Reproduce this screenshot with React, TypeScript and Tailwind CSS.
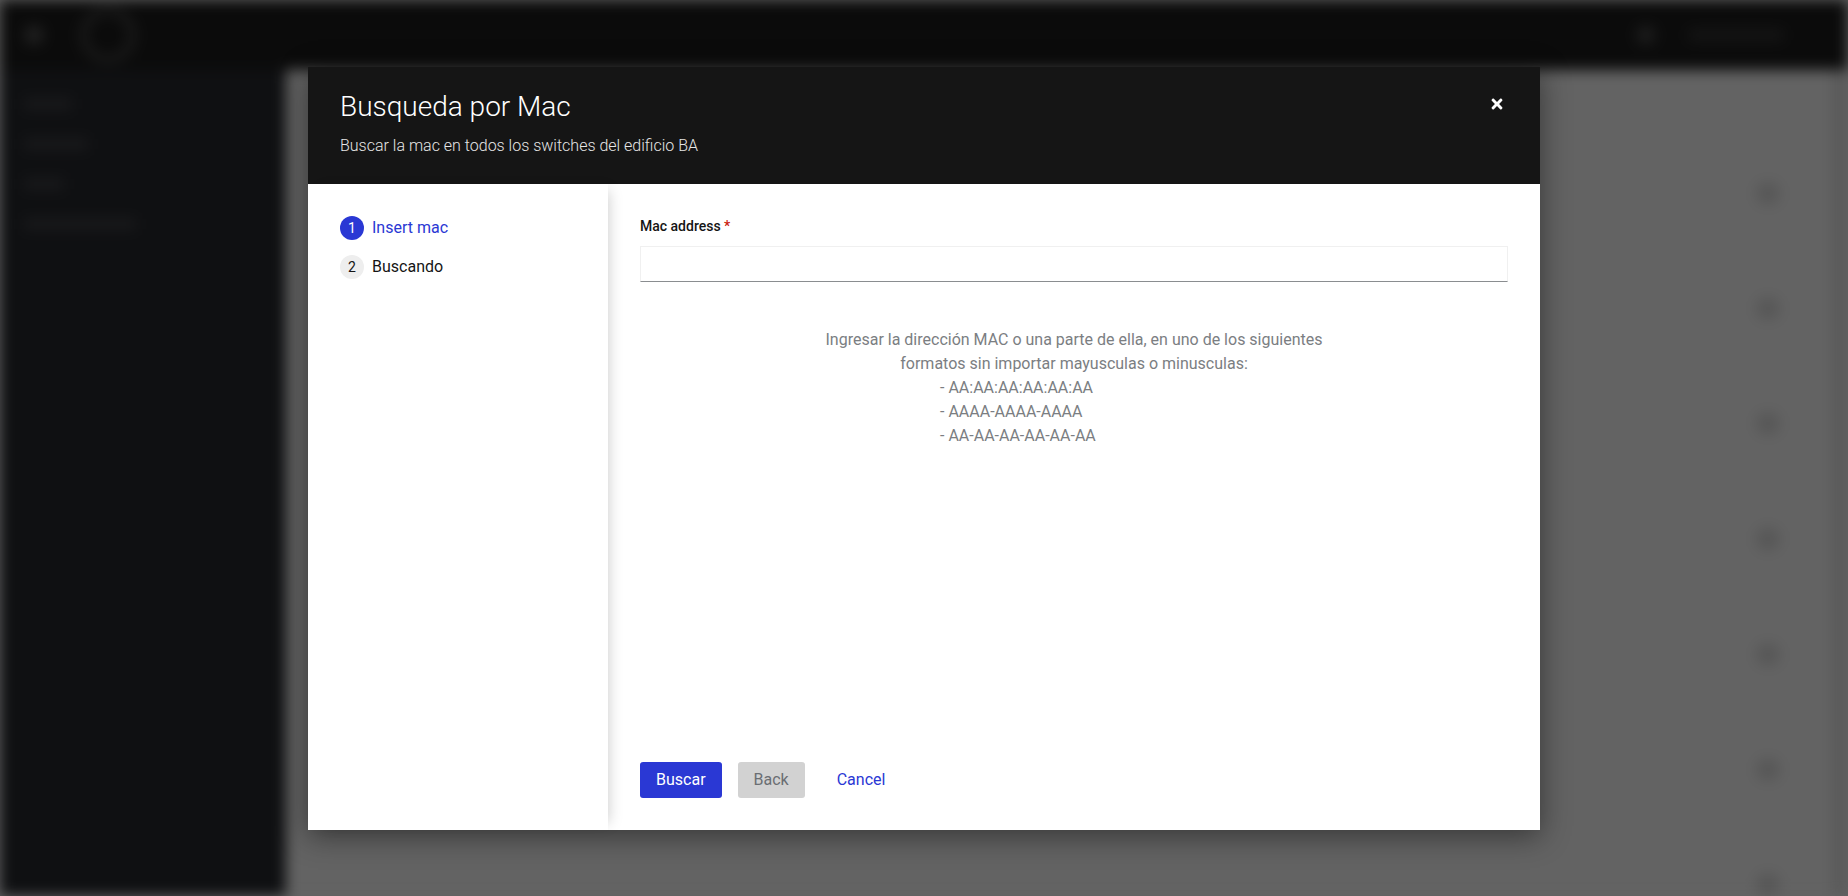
import React, { useState } from 'react';
import { FaTimes } from 'react-icons/fa';

const steps = [
    { id: 1, name: 'Insert mac' },
    { id: 2, name: 'Buscando' }
];

function BackgroundPage() {
    const rows = [0, 1, 2, 3, 4, 5, 6];
    return (
        <div className="h-full flex flex-col blur-[7px]">
            {/* Masthead */}
            <div className="h-[70px] shrink-0 bg-[#0b0b0b] flex items-center pl-6 pr-16">
                <div className="w-5 h-5 rounded-full bg-[#202020]" />
                <div className="ml-[36px] w-[56px] h-[56px] rounded-full border-[7px] border-[#1c1c1c]" />
                <div className="flex-1" />
                <div className="w-5 h-5 rounded-full bg-[#1c1c1c]" />
                <div className="ml-8 w-24 h-3 rounded bg-[#151515]" />
            </div>
            <div className="flex-1 flex min-h-0">
                {/* Sidebar */}
                <div className="w-[286px] shrink-0 bg-[#0f1012] flex flex-col gap-[28px] pt-7 pl-6">
                    <div className="w-12 h-3 bg-[#19191b]" />
                    <div className="w-16 h-3 bg-[#19191b]" />
                    <div className="w-10 h-3 bg-[#19191b]" />
                    <div className="w-28 h-3 bg-[#19191b]" />
                </div>
                {/* Main */}
                <div className="flex-1 bg-[#636363] flex">
                    <div className="flex-1 flex flex-col pt-[112px] pr-[52px] gap-[92px] items-end">
                        {rows.map(r => (
                            <div key={r} className="w-6 h-6 rounded-full bg-[#575757]" />
                        ))}
                    </div>
                    <div className="w-[16px] bg-[#5a5a5a]" />
                </div>
            </div>
        </div>
    );
}

export default function App() {
    const [mac, setMac] = useState('');
    const currentStep = 1;

    return (
        <div className="relative w-full h-screen overflow-hidden bg-[#636363] font-['Roboto',sans-serif]">
            <BackgroundPage />

            {/* Modal */}
            <div className="absolute inset-0 flex items-center justify-center">
                <div className="w-[1232px] h-[763px] flex flex-col bg-white shadow-[0_6px_28px_rgba(0,0,0,0.45)]">
                    {/* Header */}
                    <div className="h-[117px] shrink-0 bg-[#151515] flex pl-8 pr-[35px] pt-[22px]">
                        <div className="flex-1">
                            <h1 className="text-[28px] leading-[36px] text-white font-light">Busqueda por Mac</h1>
                            <p className="mt-[9px] text-base leading-6 text-[#e6e6e6] font-light">
                                Buscar la mac en todos los switches del edificio BA
                            </p>
                        </div>
                        <button className="mt-[7px] self-start text-white">
                            <FaTimes size={16} />
                        </button>
                    </div>

                    {/* Body */}
                    <div className="flex-1 flex min-h-0">
                        <nav className="relative z-10 w-[300px] shrink-0 bg-white pt-8 pl-8 shadow-[7px_0_14px_-7px_rgba(0,0,0,0.22)]">
                            <ol className="flex flex-col gap-[15px]">
                                {steps.map(step => {
                                    const active = step.id === currentStep;
                                    return (
                                        <li key={step.id} className="flex items-center gap-2 h-6">
                                            <span
                                                className={`w-6 h-6 rounded-full flex items-center justify-center text-sm ${active ? 'bg-[#2a38d4] text-white' : 'bg-[#eeeeee] text-[#151515]'}`}
                                            >
                                                {step.id}
                                            </span>
                                            <span className={`text-base ${active ? 'text-[#2a38d4]' : 'text-[#151515]'}`}>
                                                {step.name}
                                            </span>
                                        </li>
                                    );
                                })}
                            </ol>
                        </nav>

                        <div className="flex-1 flex flex-col px-8 pt-8 pb-8">
                            <label className="text-sm leading-[21px] font-medium text-[#151515]">
                                Mac address <span className="text-[#c9190b]">*</span>
                            </label>
                            <input
                                type="text"
                                value={mac}
                                onChange={(e) => setMac(e.target.value)}
                                className="mt-[9px] h-9 w-full border border-[#f0f0f0] border-b-[#8a8d90] px-2 text-base outline-none"
                            />

                            <div className="mt-[46px] text-base leading-6 text-[#7b7e82] text-center">
                                <p>Ingresar la dirección MAC o una parte de ella, en uno de los siguientes</p>
                                <p>formatos sin importar mayusculas o minusculas:</p>
                                <div className="w-[268px] mx-auto text-left">
                                    <p>- AA:AA:AA:AA:AA:AA</p>
                                    <p>- AAAA-AAAA-AAAA</p>
                                    <p>- AA-AA-AA-AA-AA-AA</p>
                                </div>
                            </div>

                            <div className="mt-auto flex gap-4">
                                <button className="h-9 px-4 rounded-[3px] bg-[#2a38d4] text-white text-base">Buscar</button>
                                <button className="h-9 px-4 rounded-[3px] bg-[#d2d2d2] text-[#6a6e73] text-base" disabled>
                                    Back
                                </button>
                                <button className="h-9 px-4 text-[#2a38d4] text-base">Cancel</button>
                            </div>
                        </div>
                    </div>
                </div>
            </div>
        </div>
    );
}
